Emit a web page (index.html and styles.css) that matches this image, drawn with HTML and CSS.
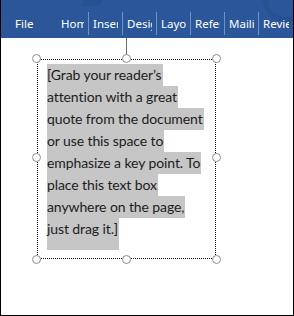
FILE: index.html
```html
<!DOCTYPE html>
<html lang="en">
<head>
  <meta charset="UTF-8">
  <title>Pull Quote Text Box</title>
  <link rel="stylesheet" href="styles.css">
</head>
<body>
  <div class="frame">
    <header class="ribbon">
      <div class="art art-one"></div>
      <div class="art art-two"></div>
      <div class="tab tab-file">File</div>
      <div class="tab tab-home"><span>Home</span></div>
      <div class="tab"><span>Insert</span></div>
      <div class="tab"><span>Design</span></div>
      <div class="tab"><span>Layout</span></div>
      <div class="tab"><span>References</span></div>
      <div class="tab"><span>Mailings</span></div>
      <div class="tab tab-last"><span>Review</span></div>
    </header>

    <div class="page">
      <div class="textbox">
        <div class="rotate-line"></div>
        <span class="handle h-tl"></span>
        <span class="handle h-tm"></span>
        <span class="handle h-tr"></span>
        <span class="handle h-ml"></span>
        <span class="handle h-mr"></span>
        <span class="handle h-bl"></span>
        <span class="handle h-bm"></span>
        <span class="handle h-br"></span>

        <div class="quote">
          <div class="line"><span>[Grab your reader’s</span></div>
          <div class="line"><span>attention with a great</span></div>
          <div class="line"><span>quote from the document</span></div>
          <div class="line"><span>or use this space to</span></div>
          <div class="line"><span>emphasize a key point. To</span></div>
          <div class="line"><span>place this text box</span></div>
          <div class="line"><span>anywhere on the page,</span></div>
          <div class="line last"><span>just drag it.]</span></div>
        </div>
      </div>
    </div>
  </div>
</body>
</html>
```

FILE: styles.css
```css
body {
  margin: 0;
  background: #fff;
}
.frame {
  width: 294px;
  height: 316px;
  box-sizing: border-box;
  border: 1px solid #000;
  border-top: none;
  overflow: hidden;
  background: #fff;
}
.ribbon {
  position: relative;
  display: flex;
  height: 38px;
  box-sizing: border-box;
  padding-top: 12px;
  margin-left: -1px;
  background: #2b579a;
  overflow: hidden;
  font-family: "Noto Sans", "Open Sans", sans-serif;
  font-size: 11.5px;
  color: #fff;
}
.art {
  position: absolute;
  background: #28528f;
}
.art-one {
  left: 86px;
  top: -10px;
  width: 18px;
  height: 16px;
  transform: skewX(-30deg);
}
.art-two {
  right: -14px;
  top: -22px;
  width: 34px;
  height: 34px;
  border-radius: 50%;
  background: none;
  border: 5px solid #28528f;
}
.tab {
  position: relative;
  width: 34px;
  height: 23px;
  line-height: 23px;
  border-right: 1px solid #7392c4;
  box-sizing: border-box;
  white-space: nowrap;
}
.tab span {
  display: block;
  margin: 0 4px 0 4px;
  overflow: hidden;
}
.tab-file {
  width: 56px;
  padding-left: 15px;
  border-right: none;
}
.tab-home {
  width: 33px;
}
.tab-home span {
  margin-left: 5px;
}
.tab-last {
  width: 34px;
  border-right: none;
}

.page {
  padding-top: 21px;
  padding-left: 36px;
}
.textbox {
  position: relative;
  width: 179px;
  height: 200px;
  box-sizing: border-box;
  border: 1px dotted #111;
  padding: 4px 0 0 9px;
}
.rotate-line {
  position: absolute;
  left: 88px;
  top: -22px;
  width: 1px;
  height: 18px;
  background: #6b6b6b;
}
.handle {
  position: absolute;
  width: 7px;
  height: 7px;
  border: 1.5px solid #8e8e8e;
  border-radius: 50%;
  background: #fff;
}
.h-tl, .h-tm, .h-tr { top: -6px; }
.h-bl, .h-bm, .h-br { bottom: -6px; }
.h-ml, .h-mr { top: 93px; }
.h-tl, .h-ml, .h-bl { left: -6px; }
.h-tr, .h-mr, .h-br { right: -6px; }
.h-tm, .h-bm { left: 84px; }

.quote {
  font-family: "Lato", "Liberation Sans", sans-serif;
  font-size: 14px;
  letter-spacing: -0.1px;
  color: #1c1c1c;
  white-space: nowrap;
}
.line {
  height: 22px;
  line-height: 22px;
}
.line span {
  display: inline-block;
  background: #c6c6c6;
  padding-right: 1px;
}
.line.last span {
  padding-bottom: 10px;
}
```
